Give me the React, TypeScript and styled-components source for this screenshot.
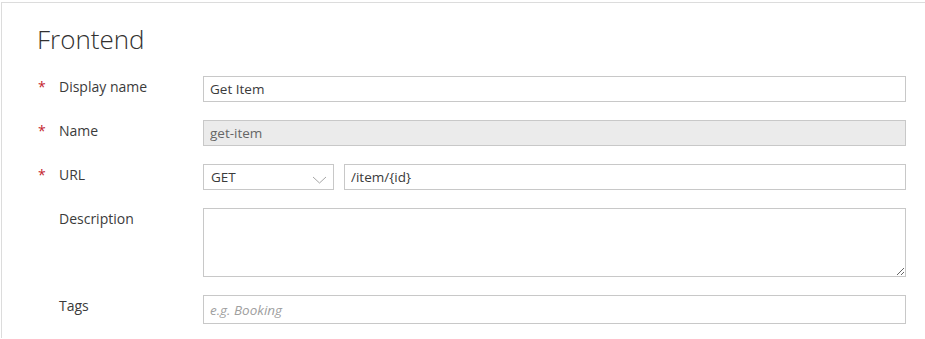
import styled, { createGlobalStyle } from "styled-components";

const GlobalStyle = createGlobalStyle`
  html, body {
    margin: 0;
    padding: 0;
    background: #ffffff;
  }
  body {
    font-family: "Open Sans", "Noto Sans", "Liberation Sans", sans-serif;
    color: #333333;
  }
`;

const Panel = styled.section`
  margin-top: 2px;
  margin-left: 1px;
  border-top: 1px solid #dcdcdc;
  border-left: 1px solid #dcdcdc;
  padding: 20px 19px 14px 35px;
  min-height: 320px;
  box-sizing: border-box;
`;

const Title = styled.h2`
  margin: 0 0 21px 0;
  font-size: 26px;
  font-weight: 300;
  line-height: 32px;
  color: #323130;
`;

const Form = styled.div`
  display: grid;
  grid-template-columns: 166px 1fr;
  row-gap: 18px;
  align-items: start;
`;

const Label = styled.label`
  display: flex;
  align-items: flex-start;
  padding-top: 1px;
  line-height: 20px;
  font-size: 14px;
  color: #3b3b3b;
`;

const Required = styled.span<{ $show: boolean }>`
  width: 22px;
  padding-left: 1px;
  box-sizing: border-box;
  color: #c4262e;
  font-size: 14px;
  visibility: ${({ $show }) => ($show ? "visible" : "hidden")};
`;

const Field = styled.div`
  display: flex;
  gap: 10px;
`;

const TextInput = styled.input<{ $disabled?: boolean }>`
  flex: 1;
  height: 26px;
  box-sizing: border-box;
  border: 1px solid #c8c8c8;
  background: ${({ $disabled }) => ($disabled ? "#ebebeb" : "#ffffff")};
  padding: 0 6px;
  font-family: inherit;
  font-size: 13.5px;
  color: ${({ $disabled }) => ($disabled ? "#666666" : "#3b3b3b")};
  outline: none;

  &::placeholder {
    color: #a0a0a0;
    font-style: italic;
  }
`;

const TallInput = styled(TextInput)`
  height: 29px;
`;

const Select = styled.div`
  position: relative;
  width: 131px;
  height: 26px;
  box-sizing: border-box;
  border: 1px solid #c8c8c8;
  padding: 0 7px;
  display: flex;
  align-items: center;
  font-size: 13.5px;
  color: #3b3b3b;

  svg {
    position: absolute;
    right: 6px;
    top: 11px;
  }
`;

const TextArea = styled.textarea`
  display: block;
  width: 100%;
  height: 69px;
  box-sizing: border-box;
  border: 1px solid #c8c8c8;
  padding: 5px 6px;
  font-family: inherit;
  font-size: 13.5px;
  resize: vertical;
  outline: none;
`;

const Chevron = () => (
  <svg width="15" height="8" viewBox="0 0 15 8">
    <path d="M1 1 L7.5 7 L14 1" fill="none" stroke="#a6a6a6" strokeWidth="1" />
  </svg>
);

export default function App() {
  return (
    <>
      <GlobalStyle />
      <Panel>
        <Title>Frontend</Title>
        <Form>
          <Label>
            <Required $show>*</Required>Display name
          </Label>
          <Field>
            <TextInput defaultValue="Get Item" />
          </Field>

          <Label>
            <Required $show>*</Required>Name
          </Label>
          <Field>
            <TextInput $disabled readOnly defaultValue="get-item" />
          </Field>

          <Label>
            <Required $show>*</Required>URL
          </Label>
          <Field>
            <Select>
              GET
              <Chevron />
            </Select>
            <TextInput defaultValue="/item/{id}" />
          </Field>

          <Label>
            <Required $show={false}>*</Required>Description
          </Label>
          <Field>
            <TextArea />
          </Field>

          <Label>
            <Required $show={false}>*</Required>Tags
          </Label>
          <Field>
            <TallInput placeholder="e.g. Booking" />
          </Field>
        </Form>
      </Panel>
    </>
  );
}
